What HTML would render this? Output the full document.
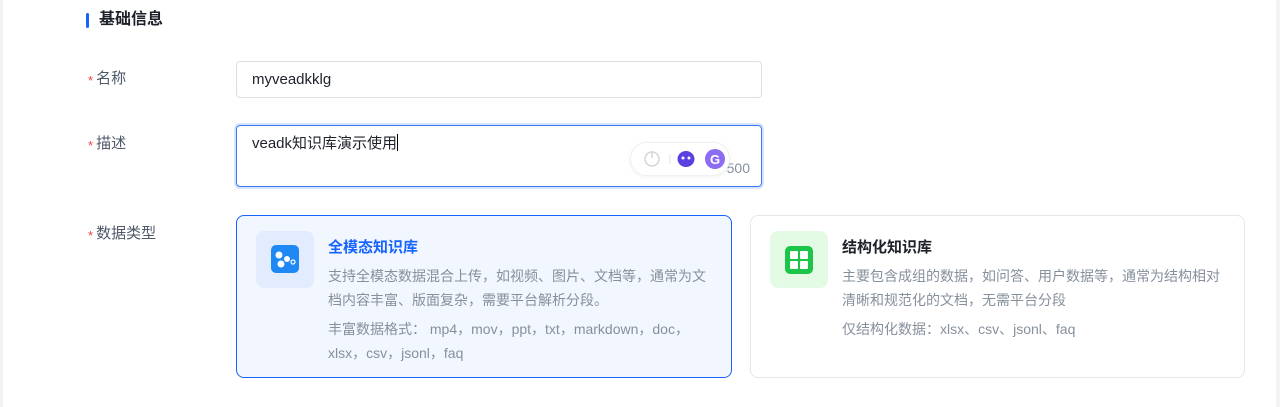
<!DOCTYPE html>
<html><head><meta charset="utf-8"><style>
*{box-sizing:border-box;margin:0;padding:0}
body{width:1280px;height:407px;background:#fff;font-family:"Liberation Sans","Noto Sans CJK SC",sans-serif;position:relative;overflow:hidden;color:#1d2129}
.edge{position:absolute;top:0;bottom:0;left:0;width:3px;background:#f2f3f5}
.edger{position:absolute;top:0;bottom:0;right:0;width:4px;background:#f2f3f5}
.bar{position:absolute;left:86px;top:13px;width:3px;height:15px;background:#1664ff;border-radius:2px}
.h{position:absolute;left:99px;top:9px;font-size:16px;font-weight:bold;line-height:22px}
.lab{position:absolute;left:88px;font-size:15px;color:#4e5969;line-height:20px}
.lab i{color:#f53f3f;font-style:normal;font-size:13px;margin-right:3px;position:relative;top:2px}
.inp{position:absolute;left:236px;top:61px;width:526px;height:37px;border:1px solid #dcdfe6;border-radius:4px;font-size:15px;padding:0 15px;line-height:35px}
.ta{position:absolute;left:236px;top:125px;width:526px;height:62px;border:1.5px solid #3a78f2;border-radius:4px;box-shadow:0 0 0 2px #d6e4ff;font-size:15px;padding:8px 15px;line-height:20px}
.cur{display:inline-block;width:1px;height:17px;background:#000;vertical-align:-3px}
.cnt{position:absolute;right:11px;bottom:8px;font-size:14px;color:#86909c}
.pill{position:absolute;left:630px;top:142px;width:100px;height:34px;border-radius:17px;background:#fff;border:1px solid #eef0f3;box-shadow:0 1px 4px rgba(0,0,0,.06)}
.card{position:absolute;top:215px;height:163px;border-radius:8px}
.c1{left:236px;width:496px;border:1px solid #1664ff;background:#f2f6ff}
.c2{left:750px;width:495px;border:1px solid #e5e6eb;background:#fff}
.ic{position:absolute;left:19px;top:15px;width:58px;height:57px;border-radius:8px}
.t{position:absolute;left:91px;top:20px;font-size:15px;font-weight:bold}
.d{position:absolute;left:91px;top:48px;width:378px;font-size:14px;color:#86909c;line-height:24px}
.f{position:absolute;left:91px;top:101px;width:370px;font-size:14px;color:#86909c;line-height:24px}
</style></head><body>
<div class="edge"></div><div class="edger"></div>
<div class="bar"></div><div class="h">基础信息</div>
<div class="lab" style="top:69px"><i>*</i>名称</div>
<div class="lab" style="top:134px"><i>*</i>描述</div>
<div class="lab" style="top:224px"><i>*</i>数据类型</div>
<div class="inp">myveadkklg</div>
<div class="ta">veadk知识库演示使用<span class="cur"></span><div class="cnt">500</div></div>
<div class="pill">
<svg width="100" height="34" style="position:absolute;left:0;top:0">
<circle cx="21" cy="16" r="7" fill="none" stroke="#d6d6d6" stroke-width="1.5"/><line x1="21" y1="8" x2="21" y2="15" stroke="#d6d6d6" stroke-width="1.5"/>
<line x1="39" y1="11" x2="39" y2="21" stroke="#e5e5e5"/>
<ellipse cx="55" cy="16" rx="8.5" ry="8" fill="#5b3fe0"/><circle cx="52" cy="15" r="1.5" fill="#fff"/><circle cx="58" cy="15" r="1.5" fill="#fff"/>
<circle cx="84" cy="16" r="10" fill="#8b6cf2"/><text x="84" y="21" font-size="13" font-weight="bold" fill="#fff" text-anchor="middle" font-family="Liberation Sans">G</text>
</svg></div>
<div class="card c1">
<div class="ic" style="background:#e3ecff"><svg width="58" height="57"><rect x="15" y="14" width="28" height="28" rx="5" fill="#1e88f5"/><circle cx="23" cy="24" r="3.5" fill="#fff"/><circle cx="25" cy="33" r="3.5" fill="#fff"/><circle cx="31" cy="28" r="3" fill="#fff"/><circle cx="37" cy="31" r="2" fill="none" stroke="#fff" stroke-width="1.2"/></svg></div>
<div class="t" style="color:#1664ff">全模态知识库</div>
<div class="d">支持全模态数据混合上传，如视频、图片、文档等，通常为文档内容丰富、版面复杂，需要平台解析分段。</div>
<div class="f">丰富数据格式： mp4，mov，ppt，txt，markdown，doc，<br>xlsx，csv，jsonl，faq</div>
</div>
<div class="card c2">
<div class="ic" style="background:#e3fbe5"><svg width="58" height="57"><rect x="15" y="15" width="28" height="28" rx="5" fill="#1dc44a"/><rect x="20" y="20" width="8" height="8" rx="1" fill="#fff"/><rect x="30" y="20" width="8" height="8" rx="1" fill="#fff"/><rect x="20" y="30" width="8" height="8" rx="1" fill="#fff"/><rect x="30" y="30" width="8" height="8" rx="1" fill="#fff"/></svg></div>
<div class="t">结构化知识库</div>
<div class="d">主要包含成组的数据，如问答、用户数据等，通常为结构相对<br>清晰和规范化的文档，无需平台分段</div>
<div class="f">仅结构化数据：xlsx、csv、jsonl、faq</div>
</div>
</body></html>
